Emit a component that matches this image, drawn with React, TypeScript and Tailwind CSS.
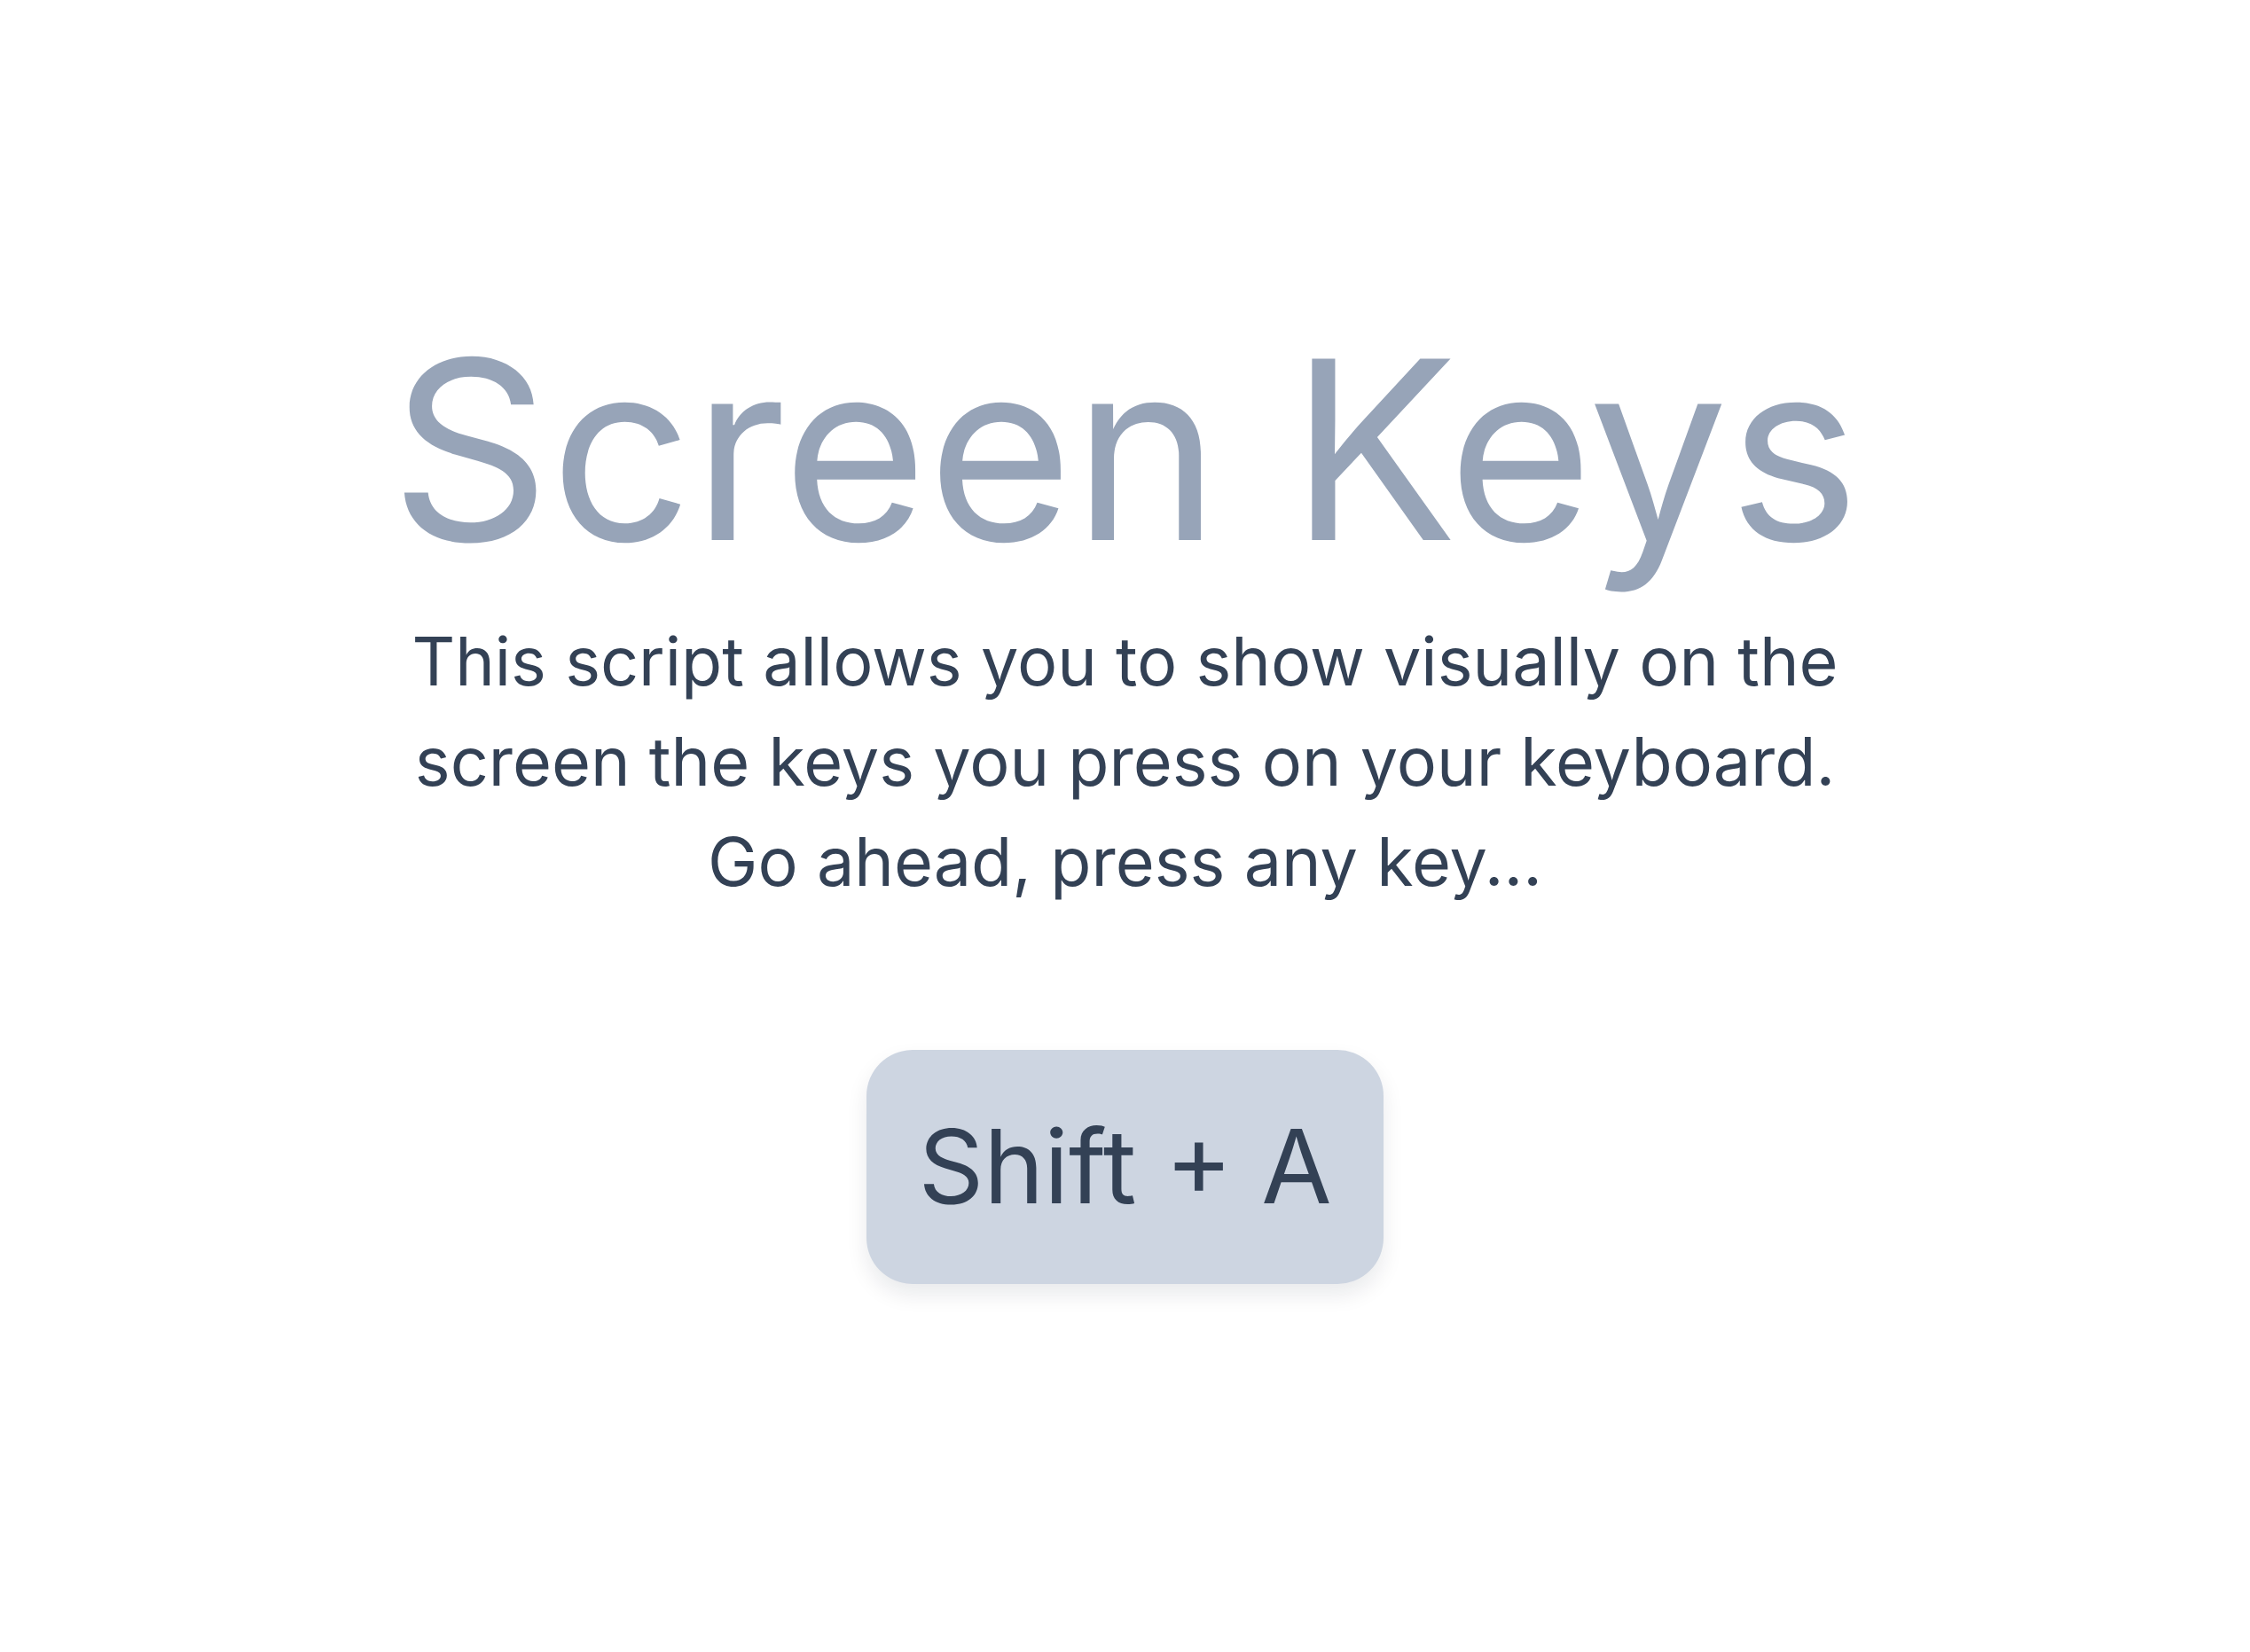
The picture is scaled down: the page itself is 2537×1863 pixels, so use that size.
export default function App() {
  return (
    <div
      className="flex min-h-screen flex-col items-center justify-center bg-white pb-[48px]"
      style={{ fontFamily: "Inter, 'Noto Sans', sans-serif" }}
    >
      <h1 className="text-[281px] leading-none font-normal text-[#97a4b8]">
        Screen Keys
      </h1>
      <p className="mt-[41px] text-center text-[75.5px] leading-[113px] text-[#334155]">
        This script allows you to show visually on the
        <br />
        screen the keys you press on your keyboard.
        <br />
        Go ahead, press any key...
      </p>
      <div className="mt-[156px] rounded-[52px] bg-[#cdd5e1] px-[58px] py-[62px] shadow-[0_12px_24px_rgba(15,23,42,0.09)]">
        <span className="block text-[115px] leading-[140px] text-[#334155]">
          Shift + A
        </span>
      </div>
    </div>
  );
}
